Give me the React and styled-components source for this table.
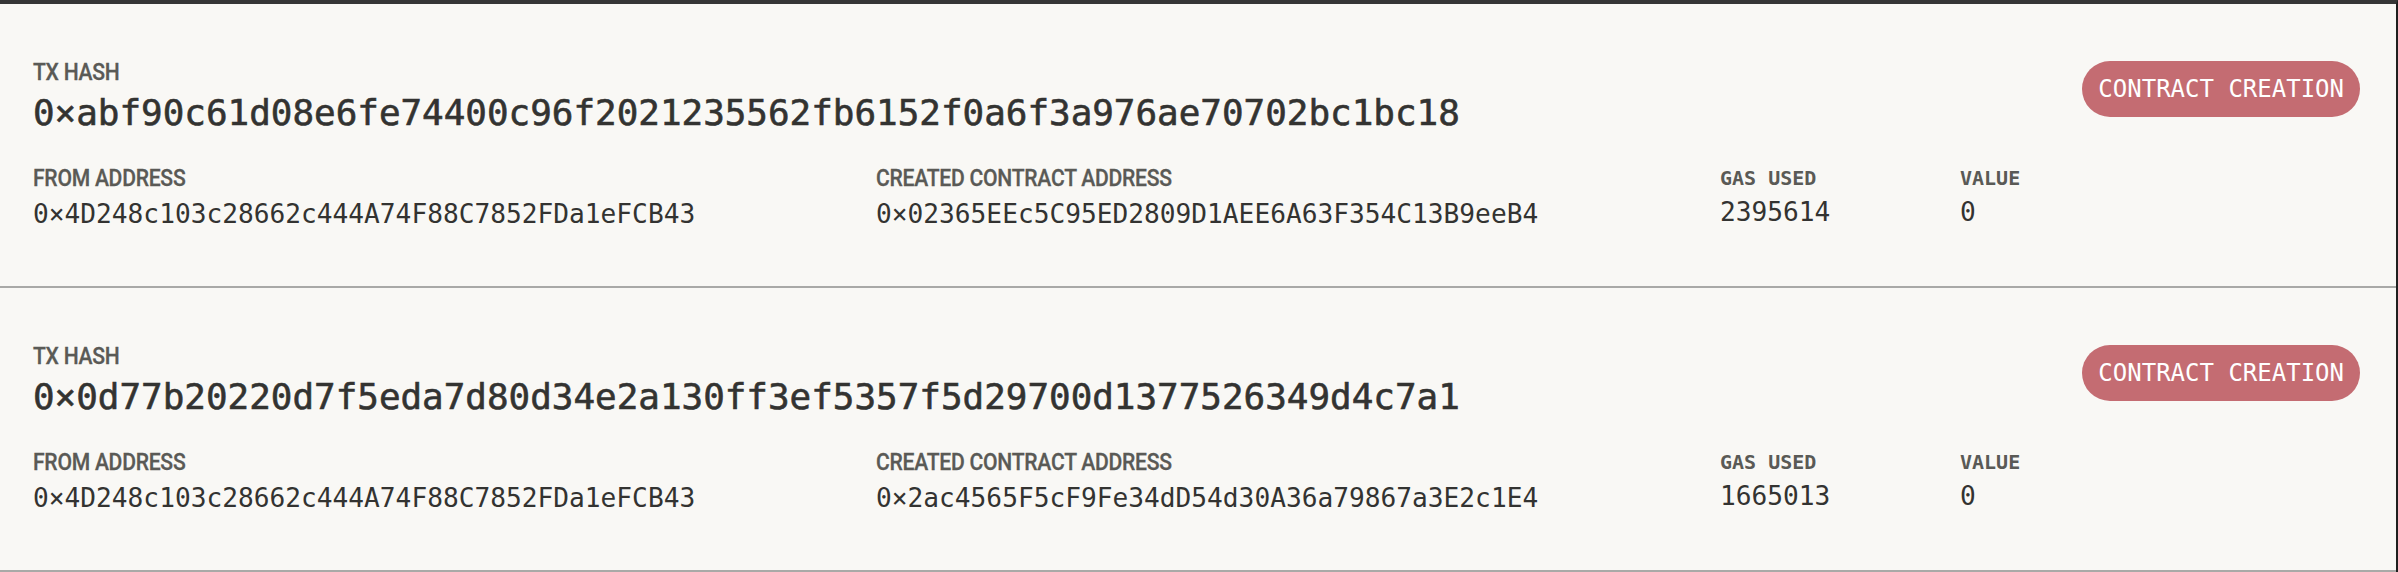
import React from "react";
import styled, { createGlobalStyle } from "styled-components";

const GlobalStyle = createGlobalStyle`
  html, body {
    margin: 0;
    padding: 0;
    background: #f9f8f5;
  }
  * { box-sizing: border-box; }
`;

const MONO = `"DejaVu Sans Mono", "Liberation Mono", monospace`;
const SANS = `Roboto, "Liberation Sans", sans-serif`;

const Page = styled.div`
  border-top: 4px solid #363636;
  border-right: 2px solid #1f1f1f;
  background: #f9f8f5;
  min-height: 568px;
`;

const Row = styled.section`
  height: 284px;
  padding: 54px 36px 0 33px;
  border-bottom: 2px solid #a9a9a7;
  display: flex;
  flex-direction: column;
`;

const Header = styled.div`
  display: flex;
  justify-content: space-between;
  align-items: flex-start;
`;

const HashBlock = styled.div`
  display: flex;
  flex-direction: column;
  gap: 5px;
`;

const Label = styled.div`
  font-family: ${SANS};
  font-weight: 500;
  font-size: 24px;
  line-height: 28px;
  color: #5a5a56;
  letter-spacing: -0.3px;
  -webkit-text-stroke: 0.3px #5a5a56;
  transform: scaleX(0.88);
  transform-origin: left center;
  white-space: nowrap;
`;

const MonoLabel = styled.div`
  font-family: ${MONO};
  font-weight: 700;
  font-size: 20px;
  line-height: 28px;
  color: #5a5a56;
  white-space: nowrap;
`;

const Hash = styled.div`
  font-family: ${MONO};
  font-size: 35.92px;
  line-height: 44px;
  color: #333331;
  -webkit-text-stroke: 0.6px #333331;
  white-space: nowrap;
`;

const Badge = styled.span`
  margin-top: 3px;
  height: 56px;
  padding: 0 16px;
  border-radius: 28px;
  background: #c46c72;
  color: #ffffff;
  font-family: ${MONO};
  font-size: 24px;
  line-height: 56px;
  white-space: nowrap;
`;

const Fields = styled.div`
  margin-top: 29px;
  display: grid;
  grid-template-columns: 843px 844px 240px 1fr;
  align-items: start;
`;

const Field = styled.div`
  display: flex;
  flex-direction: column;
  gap: ${(p) => (p.$compact ? "4px" : "6px")};
`;

const Value = styled.div`
  font-family: ${MONO};
  font-size: 26.2px;
  line-height: 32px;
  color: #333331;
  white-space: nowrap;
`;

const txs = [
  {
    hash: "0×abf90c61d08e6fe74400c96f2021235562fb6152f0a6f3a976ae70702bc1bc18",
    from: "0×4D248c103c28662c444A74F88C7852FDa1eFCB43",
    contract: "0×02365EEc5C95ED2809D1AEE6A63F354C13B9eeB4",
    gas: "2395614",
    value: "0",
  },
  {
    hash: "0×0d77b20220d7f5eda7d80d34e2a130ff3ef5357f5d29700d1377526349d4c7a1",
    from: "0×4D248c103c28662c444A74F88C7852FDa1eFCB43",
    contract: "0×2ac4565F5cF9Fe34dD54d30A36a79867a3E2c1E4",
    gas: "1665013",
    value: "0",
  },
];

function TxRow({ tx }) {
  return (
    <Row>
      <Header>
        <HashBlock>
          <Label>TX HASH</Label>
          <Hash>{tx.hash}</Hash>
        </HashBlock>
        <Badge>CONTRACT CREATION</Badge>
      </Header>
      <Fields>
        <Field>
          <Label>FROM ADDRESS</Label>
          <Value>{tx.from}</Value>
        </Field>
        <Field>
          <Label>CREATED CONTRACT ADDRESS</Label>
          <Value>{tx.contract}</Value>
        </Field>
        <Field $compact>
          <MonoLabel>GAS USED</MonoLabel>
          <Value>{tx.gas}</Value>
        </Field>
        <Field $compact>
          <MonoLabel>VALUE</MonoLabel>
          <Value>{tx.value}</Value>
        </Field>
      </Fields>
    </Row>
  );
}

export default function App() {
  return (
    <>
      <GlobalStyle />
      <Page>
        {txs.map((tx) => (
          <TxRow key={tx.hash} tx={tx} />
        ))}
      </Page>
    </>
  );
}
